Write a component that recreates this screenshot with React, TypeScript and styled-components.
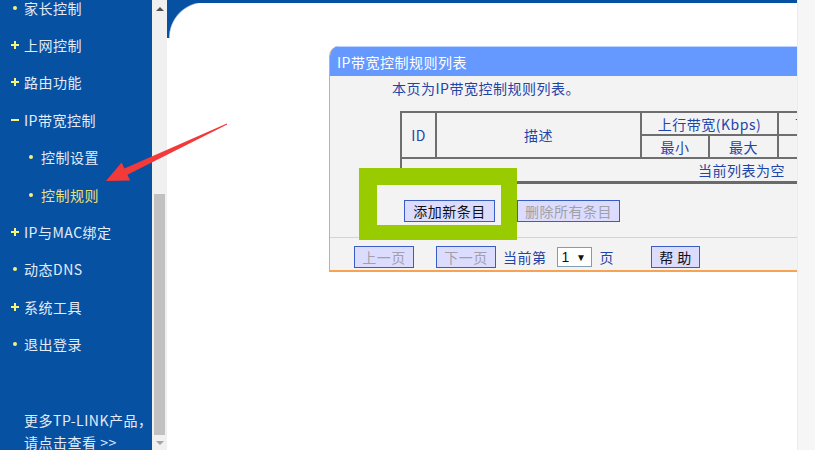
import * as React from 'react'
import styled, { createGlobalStyle } from 'styled-components'

const GlobalStyle = createGlobalStyle`
  html, body {
    margin: 0;
    padding: 0;
    overflow: hidden;
    background: #fff;
  }
  body {
    font-family: "Noto Sans CJK SC", "DejaVu Sans", sans-serif;
  }
`

const NAVY = '#0751a3'
const LINK_BLUE = '#1f45a8'

const Page = styled.div`
  position: relative;
  display: flex;
  width: 815px;
  height: 450px;
  overflow: hidden;
`

/* ---------- sidebar ---------- */
const Sidebar = styled.div`
  width: 152px;
  flex-shrink: 0;
  background: ${NAVY};
  display: flex;
  flex-direction: column;
  color: #e4ebf7;
  font-size: 14px;
  letter-spacing: 0.5px;
`
const MenuList = styled.ul`
  list-style: none;
  margin: -11px 0 0 0;
  padding: 0;
`
const MenuItem = styled.li<{ $sub?: boolean; $active?: boolean }>`
  height: 37.4px;
  display: flex;
  align-items: center;
  gap: ${(p) => (p.$sub ? '6px' : '5px')};
  padding-left: ${(p) => (p.$sub ? '26px' : '10px')};
  color: ${(p) => (p.$active ? '#ece27a' : '#e4ebf7')};
  white-space: nowrap;
`
const BulletBox = styled.span`
  width: 9px;
  height: 9px;
  display: flex;
  align-items: center;
  justify-content: center;
  flex-shrink: 0;
`
const Dot = styled.span`
  width: 4px;
  height: 4px;
  border-radius: 50%;
  background: #f7f27c;
`
const Plus = styled.span`
  position: relative;
  width: 8px;
  height: 8px;
  &::before, &::after {
    content: '';
    position: absolute;
    background: #f7f27c;
  }
  &::before { left: 0; top: 3px; width: 8px; height: 2px; }
  &::after { left: 3px; top: 0; width: 2px; height: 8px; }
`
const Minus = styled.span`
  width: 8px;
  height: 2px;
  background: #f7f27c;
`
const SideFooter = styled.div`
  margin-top: auto;
  margin-bottom: -3px;
  padding-left: 24px;
  line-height: 22px;
  white-space: nowrap;
`

/* ---------- scrollbar ---------- */
const Scrollbar = styled.div`
  width: 15px;
  flex-shrink: 0;
  background: #f0f0f0;
  display: flex;
  flex-direction: column;
`
const ScrollArrow = styled.div<{ $down?: boolean }>`
  height: ${(p) => (p.$down ? '15px' : '17px')};
  display: flex;
  align-items: center;
  justify-content: center;
  &::after {
    content: '';
    border-left: 4px solid transparent;
    border-right: 4px solid transparent;
    ${(p) =>
      p.$down
        ? 'border-top: 4px solid #a3a3a3;'
        : 'border-bottom: 4px solid #505050;'}
  }
`
const Track = styled.div`
  flex: 1;
  display: flex;
  flex-direction: column;
  justify-content: flex-end;
  padding: 0 2px;
`
const Thumb = styled.div`
  height: 241px;
  background: #c1c1c1;
`

/* ---------- main ---------- */
const Main = styled.div`
  position: relative;
  width: 630px;
  flex-shrink: 0;
  background: #fff;
  display: flex;
  flex-direction: column;
  &::before {
    content: '';
    position: absolute;
    left: 0;
    top: 0;
    width: 38px;
    height: 38px;
    background: radial-gradient(circle at 100% 100%, transparent 35px, ${NAVY} 36.5px);
  }
`
const TopBar = styled.div`
  height: 3px;
  background: ${NAVY};
`
const Content = styled.div`
  padding: 43px 0 0 162px;
`
const Panel = styled.div`
  background: #f3f3f3;
  border-left: 1px solid #f5a35a;
  border-top-left-radius: 10px;
  overflow: hidden;
  font-size: 14px;
  letter-spacing: 0.5px;
`
const PanelHeader = styled.div`
  height: 30px;
  background: #6699ff;
  border-top: 1px solid #bcd2ff;
  box-sizing: border-box;
  color: #fff;
  display: flex;
  align-items: center;
  padding-left: 7px;
  white-space: nowrap;
`
const Intro = styled.div`
  height: 24px;
  display: flex;
  align-items: center;
  padding-left: 62px;
  color: ${LINK_BLUE};
  white-space: nowrap;
`
const TableWrap = styled.div`
  margin: 11px 0 0 70px;
`
const RuleTable = styled.table`
  width: 720px;
  border-collapse: collapse;
  color: ${LINK_BLUE};
  font-size: 14px;
  letter-spacing: 0.5px;
  td {
    border: 2px solid #6e6e6e;
    height: 21px;
    padding: 0;
    text-align: center;
    white-space: nowrap;
  }
`
const EmptyCell = styled.td`
  && {
    border-top: 1px solid #9a9a9a;
    border-bottom: 3px solid #6a6a6a;
    border-right: none;
    height: 22px;
    text-align: left;
    padding-left: 296px;
  }
`
const ButtonRow = styled.div`
  height: 54px;
  display: flex;
  align-items: center;
  gap: 22px;
  padding: 1px 0 0 74px;
  box-sizing: border-box;
  border-bottom: 1px solid #fccb9a;
`
const PagerRow = styled.div`
  height: 34px;
  display: flex;
  align-items: center;
  padding-left: 24px;
  padding-top: 6px;
  box-sizing: border-box;
  border-bottom: 2px solid #f7a356;
  color: ${LINK_BLUE};
  white-space: nowrap;
`
const Btn = styled.button<{ $disabled?: boolean; $w: number }>`
  width: ${(p) => p.$w}px;
  height: 22px;
  padding: 0;
  background: #dcdcfe;
  border: 1px solid #3a5cc7;
  border-radius: 0;
  font-family: inherit;
  font-size: 14px;
  letter-spacing: 0.5px;
  color: ${(p) => (p.$disabled ? '#a0a0a8' : '#111')};
  cursor: default;
`
const PageSelect = styled.div`
  width: 35px;
  height: 20px;
  background: #fff;
  border: 1px solid #7f9db9;
  display: flex;
  align-items: center;
  justify-content: space-between;
  padding: 0 4px;
  box-sizing: border-box;
  color: #111;
  font-family: "Liberation Sans", sans-serif;
  font-size: 14px;
  span { font-size: 10px; }
`

/* ---------- right edge ---------- */
const RightStrip = styled.div`
  flex: 1;
  background: #f6f6f6;
  border-left: 1px solid #ececec;
`

/* ---------- annotations ---------- */
const Highlight = styled.div`
  position: absolute;
  left: 359px;
  top: 168px;
  width: 158px;
  height: 72px;
  box-sizing: border-box;
  border: solid #99cc00;
  border-width: 17px 16px 15px 18px;
  pointer-events: none;
`
const ArrowSvg = styled.svg`
  position: absolute;
  left: 0;
  top: 0;
  pointer-events: none;
`

type Bullet = 'dot' | 'plus' | 'minus'
const menu: { label: string; bullet: Bullet; sub?: boolean; active?: boolean }[] = [
  { label: '家长控制', bullet: 'dot' },
  { label: '上网控制', bullet: 'plus' },
  { label: '路由功能', bullet: 'plus' },
  { label: 'IP带宽控制', bullet: 'minus' },
  { label: '控制设置', bullet: 'dot', sub: true },
  { label: '控制规则', bullet: 'dot', sub: true, active: true },
  { label: 'IP与MAC绑定', bullet: 'plus' },
  { label: '动态DNS', bullet: 'dot' },
  { label: '系统工具', bullet: 'plus' },
  { label: '退出登录', bullet: 'dot' },
]

const BulletIcon = ({ type }: { type: Bullet }) => (
  <BulletBox>{type === 'plus' ? <Plus /> : type === 'minus' ? <Minus /> : <Dot />}</BulletBox>
)

export default function App() {
  return (
    <Page>
      <GlobalStyle />
      <Sidebar>
        <MenuList>
          {menu.map((m) => (
            <MenuItem key={m.label} $sub={m.sub} $active={m.active}>
              <BulletIcon type={m.bullet} />
              {m.label}
            </MenuItem>
          ))}
        </MenuList>
        <SideFooter>
          更多TP-LINK产品，
          <br />
          请点击查看 &gt;&gt;
        </SideFooter>
      </Sidebar>
      <Scrollbar>
        <ScrollArrow />
        <Track>
          <Thumb />
        </Track>
        <ScrollArrow $down />
      </Scrollbar>
      <Main>
        <TopBar />
        <Content>
          <Panel>
            <PanelHeader>IP带宽控制规则列表</PanelHeader>
            <Intro>本页为IP带宽控制规则列表。</Intro>
            <TableWrap>
              <RuleTable>
                <tbody>
                  <tr>
                    <td rowSpan={2} style={{ width: 33 }}>ID</td>
                    <td rowSpan={2} style={{ width: 203 }}>描述</td>
                    <td colSpan={2}>上行带宽(Kbps)</td>
                    <td colSpan={2} style={{ textAlign: 'left', paddingLeft: 16 }}>下行带宽(Kbps)</td>
                    <td rowSpan={2}>启用</td>
                    <td rowSpan={2}>配置</td>
                  </tr>
                  <tr>
                    <td style={{ width: 66 }}>最小</td>
                    <td style={{ width: 67 }}>最大</td>
                    <td style={{ width: 75 }}>最小</td>
                    <td style={{ width: 75 }}>最大</td>
                  </tr>
                  <tr>
                    <EmptyCell colSpan={8}>当前列表为空</EmptyCell>
                  </tr>
                </tbody>
              </RuleTable>
            </TableWrap>
            <ButtonRow>
              <Btn $w={91}>添加新条目</Btn>
              <Btn $w={103} $disabled>删除所有条目</Btn>
            </ButtonRow>
            <PagerRow>
              <Btn $w={60} $disabled>上一页</Btn>
              <Btn $w={60} $disabled style={{ marginLeft: 22 }}>下一页</Btn>
              <span style={{ marginLeft: 7 }}>当前第</span>
              <PageSelect style={{ marginLeft: 10 }}>
                1<span>▼</span>
              </PageSelect>
              <span style={{ marginLeft: 8 }}>页</span>
              <Btn $w={49} style={{ marginLeft: 37 }}>帮 助</Btn>
            </PagerRow>
          </Panel>
        </Content>
      </Main>
      <RightStrip />
      <Highlight />
      <ArrowSvg width="815" height="450" viewBox="0 0 815 450">
        <polygon
          fill="#f23a3a"
          points="106,181 121.6,162.6 124.4,168.4 226.8,123.5 227.2,124.5 127.4,174.8 130.2,180.6"
        />
      </ArrowSvg>
    </Page>
  )
}
